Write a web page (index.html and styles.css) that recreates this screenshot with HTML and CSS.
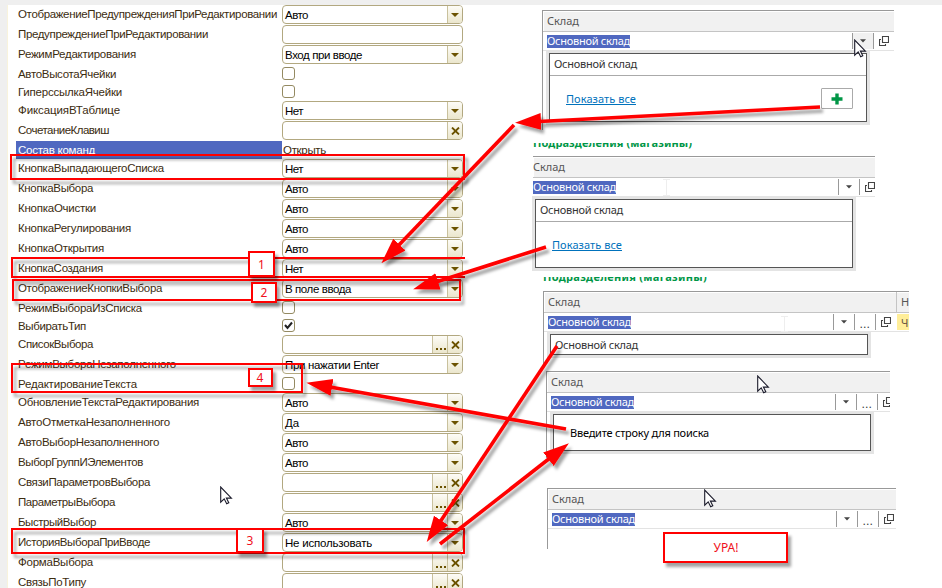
FILE: index.html
```html
<!DOCTYPE html>
<html lang="ru">
<head>
<meta charset="utf-8">
<title>Свойства поля</title>
<link rel="stylesheet" href="styles.css">
</head>
<body>
<svg class="defs" width="0" height="0">
  <symbol id="open" viewBox="0 0 10 10"><path d="M3.5 .5h6v6h-6zM2 3.5H.5v6h6V8" fill="none" stroke="#444" stroke-width="1.1"/></symbol>
  <symbol id="down" viewBox="0 0 6 4"><path d="M0 .3h6L3 3.6z" fill="#444"/></symbol>
  <symbol id="cursor" viewBox="0 0 13 19"><path d="M.7 1v15.2l3.5-3.4 2.5 5 2.1-1.1-2.4-4.6h5z" fill="#fff" stroke="#1a1a2a" stroke-width="1.1"/></symbol>
</svg>
<div class="page">
  <main class="props" id="props"></main>
  <section class="samples">
    <div class="panel p1">
      <div class="head"><span data-w="32">Склад</span></div>
      <div class="line"><span class="sel" data-w="83">Основной склад</span>
        <div class="tools"><i class="tool hot"><svg width="6" height="4"><use href="#down"/></svg></i><i class="tool"><svg width="10" height="10"><use href="#open"/></svg></i></div></div>
      <div class="popup"><div class="item"><span data-w="83">Основной склад</span></div>
        <div class="more"><a data-w="70">Показать все</a><span class="add"><svg width="12" height="12"><path d="M6 .5v11M.5 6h11" stroke="#009646" stroke-width="3.4"/></svg></span></div></div>
    </div>
    <div class="green g1"><span data-w="159">Подразделения (магазины)</span></div>
    <div class="panel p2">
      <div class="head"><span data-w="32">Склад</span></div>
      <div class="line"><span class="sel" data-w="83">Основной склад</span>
        <div class="tools"><i class="tool"><svg width="6" height="4"><use href="#down"/></svg></i><i class="tool"><svg width="10" height="10"><use href="#open"/></svg></i></div></div>
      <div class="popup"><div class="item"><span data-w="83">Основной склад</span></div>
        <div class="more"><a data-w="70">Показать все</a></div></div>
    </div>
    <div class="green g2"><span data-w="164">Подразделения (магазины)</span></div>
    <div class="panel p3">
      <div class="head"><span data-w="32">Склад</span><b class="col">Н</b></div>
      <div class="line"><span class="sel" data-w="83">Основной склад</span>
        <div class="tools"><i class="tool"><svg width="6" height="4"><use href="#down"/></svg></i><i class="tool dots">...</i><i class="tool"><svg width="10" height="10"><use href="#open"/></svg></i></div><b class="mark">Ч</b></div>
      <div class="popup"><div class="item"><span data-w="83">Основной склад</span></div></div>
    </div>
    <div class="panel p4">
      <div class="head"><span data-w="32">Склад</span></div>
      <div class="line"><span class="sel" data-w="83">Основной склад</span>
        <div class="tools"><i class="tool"><svg width="6" height="4"><use href="#down"/></svg></i><i class="tool dots">...</i><i class="tool"><svg width="10" height="10"><use href="#open"/></svg></i></div></div>
      <div class="popup"><div class="hint"><span data-w="139">Введите строку для поиска</span></div></div>
    </div>
    <div class="panel p5">
      <div class="head"><span data-w="32">Склад</span></div>
      <div class="line"><span class="sel" data-w="83">Основной склад</span>
        <div class="tools"><i class="tool"><svg width="6" height="4"><use href="#down"/></svg></i><i class="tool dots">...</i><i class="tool"><svg width="10" height="10"><use href="#open"/></svg></i></div></div>
    </div>
  </section>
  <svg class="notes" width="942" height="588">
    <defs>
      <marker id="tip" markerUnits="userSpaceOnUse" markerWidth="26" markerHeight="18" refX="2" refY="8.5" orient="auto"><path d="M0 0L26 8.5L0 17z" fill="red"/></marker>
      <filter id="sh" x="-10" y="-10" width="970" height="610" filterUnits="userSpaceOnUse"><feDropShadow dx="3" dy="4" stdDeviation="1.6" flood-color="#000" flood-opacity=".36"/></filter>
    </defs>
    <g fill="none" stroke="red" stroke-width="2" filter="url(#sh)">
      <path d="M11 155H464V179H11z"/>
      <path d="M465 258H12V277H465"/>
      <path d="M13 280H460V300H13z"/>
      <path d="M12 364H302V392H12z"/>
      <path d="M12 529H464V553H12z"/>
    </g>
    <g fill="none" stroke="red" stroke-width="3.6" filter="url(#sh)">
      <path d="M820 107L539 121.5" marker-end="url(#tip)"/>
      <path d="M514 125L398 246" marker-end="url(#tip)"/>
      <path d="M546 247L436 282" marker-end="url(#tip)"/>
      <path d="M557 346L440 522" marker-end="url(#tip)"/>
      <path d="M440 544L550 458" marker-end="url(#tip)"/>
      <path d="M566 429L330 387" marker-end="url(#tip)"/>
    </g>
    <g fill="#fff" stroke="red" stroke-width="2" filter="url(#sh)">
      <path d="M249 252h25v24h-25z"/>
      <path d="M252 283h24v19h-24z"/>
      <path d="M249 369h23v17h-23z"/>
      <path d="M237 529h26v23h-26z"/>
      <path d="M664 533h123v29H664z"/>
    </g>
    <g class="nums">
      <text x="261.5" y="269">1</text><text x="264" y="297">2</text><text x="260" y="382">4</text><text x="250" y="545">3</text><text x="726" y="552">УРА!</text>
    </g>
    <g fill="none" stroke="#eee"><path d="M663 179.5h7M666.500 180v15M663 195.500h7M781 316.500h7M784.500 317v14M781 331.500h7"/></g>
    <use href="#cursor" x="854" y="39" width="13" height="19"/>
    <use href="#cursor" x="757" y="375" width="13" height="19"/>
    <use href="#cursor" x="704" y="489" width="13" height="19"/>
    <use href="#cursor" x="220" y="486" width="13" height="19"/>
  </svg>
</div>
<script src="main.js"></script>
</body>
</html>
```
FILE: styles.css
```css
* { box-sizing: border-box; }
body { margin: 0; background: #fff; }
.defs { position: absolute; }
.page {
  position: relative;
  display: flex;
  width: 942px;
  height: 588px;
  overflow: hidden;
  border-top: 5px solid #efefef;
  font: 11.5px/16px "Liberation Sans", Arial, sans-serif;
  color: #3c2c10;
}
[data-w] { display: inline-block; white-space: nowrap; }
.props {
  flex: none;
  width: 520px;
  border-left: 7px solid #efefef;
  padding-left: 9px;
  background: linear-gradient(90deg, #f8f3dc 1px, #fff 1px);
}
.row { display: grid; grid-template-columns: 266px 181px; height: 20px; align-items: start; }
.row.low { height: 18px; }
.label { padding: 1px 0 0 2px; height: 18px; }
.picked .label { background: #5068c0; color: #fff; }
.picked .plain { padding: 1px 0 0 1px; }
.field {
  display: flex;
  height: 19px;
  border: 1px solid #b2a880;
  border-radius: 4px;
  overflow: hidden;
  background: #fff;
  color: #000;
}
.value { flex: 1; padding: 1px 0 0 2px; }
.btn {
  width: 15px;
  border-left: 1px solid #c9c19d;
  background: linear-gradient(#fdfcf7, #ebe6cc);
  display: flex;
  align-items: center;
  justify-content: center;
}
.check { width: 13px; height: 13px; margin-top: 2px; border: 1px solid #948a62; border-radius: 3px; background: #fff; }
.check svg { display: block; }

.samples {
  display: flex;
  flex-direction: column;
  font: 11px/14px "Noto Sans", "Open Sans", sans-serif;
  color: #333;
}
.panel { position: relative; flex: none; border-left: 1px solid #999; }
.head {
  display: flex;
  height: 22px;
  padding: 3px 0 0 4px;
  border-top: 1px solid #999;
  border-bottom: 1px solid #c4c4c4;
  background: #f1f1f1;
  box-shadow: inset 1px 1px #fff;
  color: #555;
}
.line { display: flex; height: 19px; padding-left: 4px; border-bottom: 1px solid #e3e3e3; overflow: hidden; }
.sel { height: 13px; margin-top: 3px; background: #5068c0; color: #fff; line-height: 12px; }
.tools { display: flex; margin: 1px 0 1px auto; }
.tool { width: 21px; border-left: 1px solid #999; display: flex; align-items: center; justify-content: center; font-style: normal; }
.hot { background: #f1f1f1; }
.dots { padding-top: 4px; letter-spacing: .5px; }
.popup { position: absolute; border: 1px solid #555; background: #fff; box-shadow: 0 0 0 3px #e4e4e4; width: 318px; }
.item { padding: 3px 0 0 4px; height: 21px; }
.more { display: flex; justify-content: space-between; border-top: 1px solid #aaa; padding: 12px 13px 0 16px; }
.more a { height: 14px; margin-top: 4px; color: #0072bc; text-decoration: underline; }
.add { display: flex; align-items: center; justify-content: center; width: 32px; height: 21px; border: 1px solid #aaa; border-radius: 1px; }
.hint { padding: 11px 0 0 16px; color: #000; }
.green { position: relative; overflow: hidden; display: flex; align-items: flex-end; flex: none; color: #009646; font-weight: bold; }
.g1 { height: 6px; margin: 13px 0 7px 13px; }
.g2 { height: 6px; margin: 6px 0 8px 23px; }
.green span { margin-bottom: -1px; }

.p1 { width: 352px; height: 120px; margin: 5px 0 0 22px; }
.p1 .popup { left: 6px; top: 43px; height: 69px; }
.p2 { width: 343px; height: 115px; margin-left: 12px; border-left-color: transparent; }
.p2 .head, .p2 .line { padding-left: 0; }
.p2 .tools { margin-right: -5px; }
.p2 .popup { left: 2px; top: 43px; height: 69px; }
.p3 { width: 366px; height: 75px; margin-left: 23px; }
.p3 .popup { left: 6px; top: 43px; height: 21px; }
.col { margin: -3px 0 0 auto; width: 13px; height: 20px; padding: 3px 0 0 4px; border-left: 1px solid #c4c4c4; font-weight: normal; overflow: hidden; }
.mark { width: 12px; margin: 1px 0 1px 1px; padding: 2px 0 0 4px; background: #ffee99; font-weight: normal; color: #654; overflow: hidden; }
.p4 { width: 344px; height: 87px; margin: 5px 0 0 26px; }
.p4 .popup { left: 6px; top: 43px; height: 37px; }
.p4 .tools { margin-right: -8px; }
.p5 { width: 349px; height: 61px; margin: 30px 0 0 27px; }
.p5 .tools { margin-right: -3px; }

.notes { position: absolute; left: 0; top: -5px; }
.nums { font: 12px "Noto Sans", sans-serif; fill: #f01020; text-anchor: middle; }
```
FILE: main.js
```js
// [label, label width, kind, value, value width]
const rows = [
  ["ОтображениеПредупрежденияПриРедактировании", 259, "list", "Авто", 23],
  ["ПредупреждениеПриРедактировании", 190, "text"],
  ["РежимРедактирования", 118, "list", "Вход при вводе", 77],
  ["АвтоВысотаЯчейки", 98, "check"],
  ["ГиперссылкаЯчейки", 104, "check"],
  ["ФиксацияВТаблице", 102, "list", "Нет", 18],
  ["СочетаниеКлавиш", 91, "clear"],
  ["Состав команд", 77, "plain", "Открыть", 43],
  ["КнопкаВыпадающегоСписка", 146, "list", "Нет", 18],
  ["КнопкаВыбора", 75, "list", "Авто", 23],
  ["КнопкаОчистки", 78, "list", "Авто", 23],
  ["КнопкаРегулирования", 113, "list", "Авто", 23],
  ["КнопкаОткрытия", 86, "list", "Авто", 23],
  ["КнопкаСоздания", 85, "list", "Нет", 18],
  ["ОтображениеКнопкиВыбора", 144, "list", "В поле ввода", 66],
  ["РежимВыбораИзСписка", 124, "check"],
  ["ВыбиратьТип", 68, "checked"],
  ["СписокВыбора", 75, "pick"],
  ["РежимВыбораНезаполненного", 158, "list", "При нажатии Enter", 94],
  ["РедактированиеТекста", 119, "check"],
  ["ОбновлениеТекстаРедактирования", 181, "list", "Авто", 23],
  ["АвтоОтметкаНезаполненного", 152, "list", "Да", 14],
  ["АвтоВыборНезаполненного", 141, "list", "Авто", 23],
  ["ВыборГруппИЭлементов", 125, "list", "Авто", 23],
  ["СвязиПараметровВыбора", 132, "pick"],
  ["ПараметрыВыбора", 97, "pick"],
  ["БыстрыйВыбор", 78, "list", "Авто", 23],
  ["ИсторияВыбораПриВводе", 132, "list", "Не использовать", 87],
  ["ФормаВыбора", 75, "pick"],
  ["СвязьПоТипу", 68, "pick"]
];
const down = '<span class="btn"><svg width="8" height="4"><path d="M0 0h8L4 4z" fill="#6b5200"/></svg></span>';
const cross = '<span class="btn"><svg width="9" height="8"><path d="M1 .5l7 7M8 .5l-7 7" stroke="#6b5200" stroke-width="1.8"/></svg></span>';
const dots = '<span class="btn"><svg width="11" height="10"><path d="M1 8h2v2H1zM5 8h2v2H5zM9 8h2v2H9z" fill="#6b5200"/></svg></span>';
const tick = '<svg width="11" height="11"><path d="M2 5l2.500 3L9 2.500" fill="none" stroke="#222" stroke-width="2"/></svg>';

function control(kind, value, width) {
  const text = value ? `<span data-w="${width}">${value}</span>` : "";
  if (kind === "plain") return `<div class="plain">${text}</div>`;
  if (kind.startsWith("check")) return `<div class="check">${kind === "checked" ? tick : ""}</div>`;
  const buttons = { list: down, clear: cross, pick: dots + cross, text: "" }[kind];
  return `<div class="field"><div class="value">${text}</div>${buttons}</div>`;
}

document.getElementById("props").innerHTML = rows.map(([label, w, kind, value, vw]) => {
  const low = kind === "plain" || kind.startsWith("check") ? " low" : "";
  const picked = kind === "plain" ? " picked" : "";
  return `<div class="row${low}${picked}"><div class="label"><span data-w="${w}">${label}</span></div>${control(kind, value, vw)}</div>`;
}).join("");

// Spread the letters so that every caption takes its nominal width.
document.querySelectorAll("[data-w]").forEach(el => {
  const gap = (el.dataset.w - el.getBoundingClientRect().width) / el.textContent.length;
  el.style.letterSpacing = gap + "px";
});
```
